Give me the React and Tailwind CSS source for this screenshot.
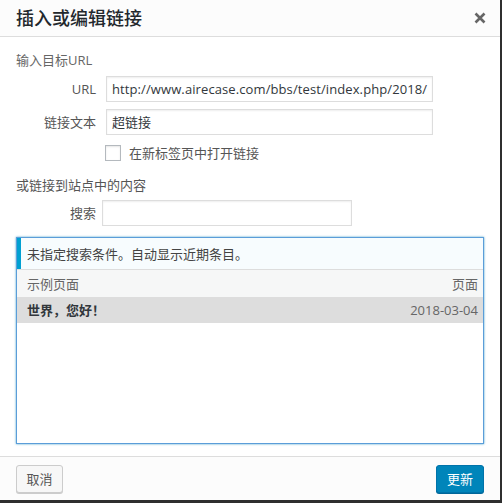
export default function App() {
  const font = { fontFamily: '"Open Sans", "Noto Sans CJK SC", sans-serif' }
  return (
    <div className="w-[502px] h-[503px] bg-[#2f2f2f] overflow-hidden" style={font}>
      <div className="w-[500px] h-[500px] bg-white flex flex-col text-[13px] leading-[18px] text-[#444]">
        <div className="h-[37px] shrink-0 bg-[#fcfcfc] border-b border-[#dddddd] flex items-center justify-between pl-4 pr-[14px]">
          <h1 className="text-[18px] leading-none text-[#23282d] font-medium">插入或编辑链接</h1>
          <svg width="12" height="12" viewBox="0 0 12 12" className="text-[#666]">
            <path d="M1.5 1.5 L10.5 10.5 M10.5 1.5 L1.5 10.5" stroke="currentColor" strokeWidth="2.6" />
          </svg>
        </div>

        <div className="flex-1 flex flex-col px-4 pt-[14px]">
          <p className="text-[#666] h-[18px]">输入目标URL</p>
          <div className="mt-[7px] flex items-center">
            <span className="w-[80px] text-right text-[#555]">URL</span>
            <div className="ml-[10px] w-[327px] h-[26px] border border-[#dddddd] flex items-center px-[5px] text-[13px] tracking-[0.1px] text-[#32373c] whitespace-nowrap overflow-hidden shadow-[inset_0_1px_2px_rgba(0,0,0,0.07)]">
              http://www.airecase.com/bbs/test/index.php/2018/
            </div>
          </div>
          <div className="mt-[7px] flex items-center">
            <span className="w-[80px] text-right text-[#555]">链接文本</span>
            <div className="ml-[10px] w-[327px] h-[26px] border border-[#dddddd] flex items-center px-[5px] text-[13px] text-[#32373c] shadow-[inset_0_1px_2px_rgba(0,0,0,0.07)]">
              超链接
            </div>
          </div>
          <label className="mt-[10px] ml-[89px] h-[16px] flex items-center gap-[8px]">
            <span className="w-[16px] h-[16px] border border-[#b4b9be] bg-white shadow-[inset_0_1px_2px_rgba(0,0,0,0.1)]" />
            <span className="text-[#555] leading-[16px]">在新标签页中打开链接</span>
          </label>

          <p className="mt-[15px] h-[18px] text-[#555]">或链接到站点中的内容</p>
          <div className="mt-[6px] flex items-center">
            <span className="w-[80px] text-right text-[#555]">搜索</span>
            <div className="ml-[6px] w-[250px] h-[26px] border border-[#dddddd] shadow-[inset_0_1px_2px_rgba(0,0,0,0.07)]" />
          </div>

          <div className="mt-[11px] h-[207px] border border-[#5b9dd9] shadow-[0_0_2px_rgba(30,140,190,0.8)] flex flex-col">
            <div className="h-[31px] shrink-0 border-l-4 border-[#00a0d2] bg-[#f7fcfe] flex items-center pl-[6px] text-[#444]">
              未指定搜索条件。自动显示近期条目。
            </div>
            <div className="h-px shrink-0 bg-[#dddddd]" />
            <div className="h-[27px] shrink-0 bg-[#f6f7f7] flex items-center justify-between pl-[10px] pr-[5px] text-[#666]">
              <span>示例页面</span>
              <span>页面</span>
            </div>
            <div className="h-[26px] shrink-0 bg-[#dddddd] flex items-center justify-between pl-[10px] pr-[5px]">
              <span className="font-semibold text-[#32373c]">世界，您好！</span>
              <span className="text-[#666]">2018-03-04</span>
            </div>
          </div>
        </div>

        <div className="h-[44px] shrink-0 bg-[#fcfcfc] border-t border-[#dddddd] flex items-center justify-between px-4 pt-[1px]">
          <button className="w-[47px] h-[28px] rounded-[3px] border border-[#cccccc] bg-[#f7f7f7] shadow-[0_1px_0_#cccccc] text-[13px] text-[#555]">
            取消
          </button>
          <button className="w-[48px] h-[28px] rounded-[3px] border border-[#0073aa] bg-[#0085ba] shadow-[0_1px_0_#006799] text-[13px] text-white">
            更新
          </button>
        </div>
      </div>
    </div>
  )
}
